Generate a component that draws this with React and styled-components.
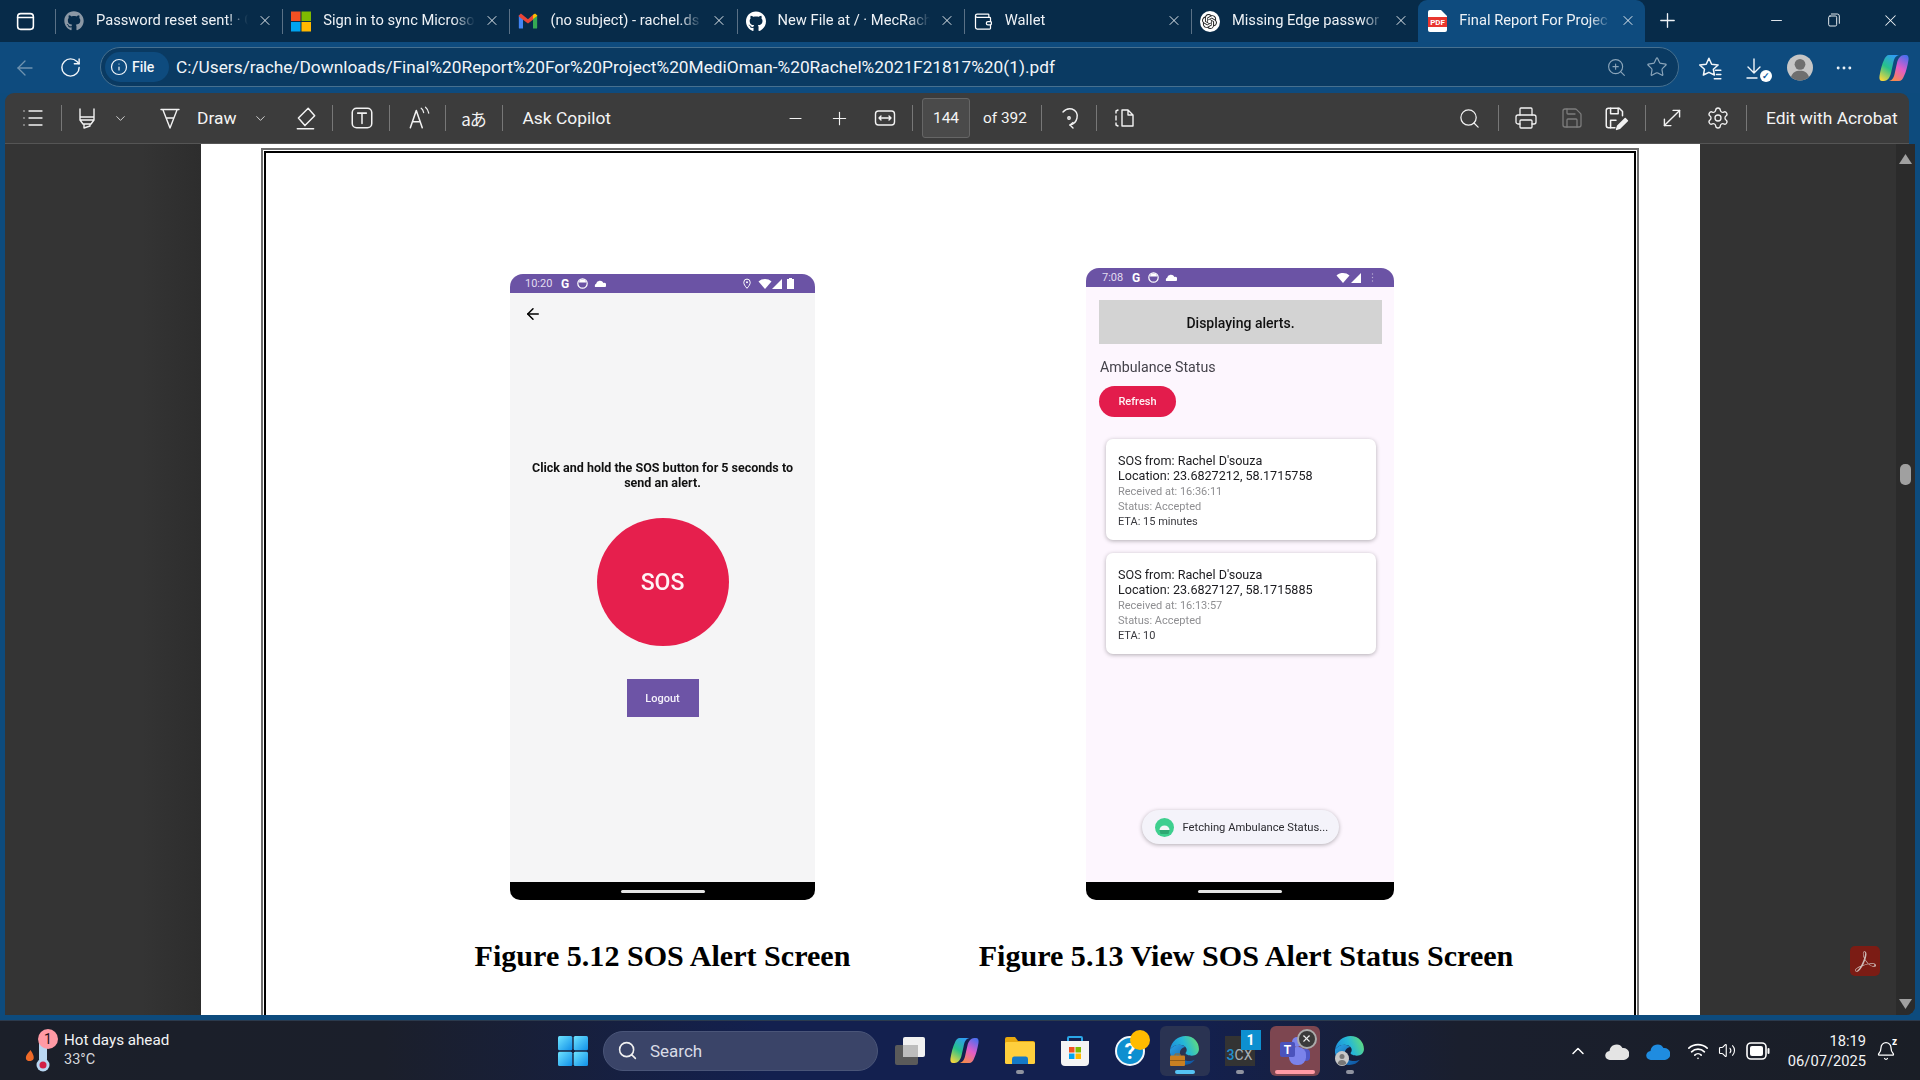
import React from 'react';
import styled, { createGlobalStyle } from 'styled-components';
import { FaGithub } from 'react-icons/fa';
import { SiOpenai, SiAdobeacrobatreader } from 'react-icons/si';
import { X, Minus, Plus, ChevronDown, List, RotateCw, Search, Printer, Save, Settings, MoveDiagonal, Star, ZoomIn, ChevronUp, Info, MoreHorizontal, ArrowLeft, Wallet, Volume2, Wifi, Bell } from 'lucide-react';

const UI = '"Roboto", "Noto Sans", sans-serif';

const Global = createGlobalStyle`
  html, body { margin: 0; padding: 0; width: 1920px; height: 1080px; overflow: hidden; background: #0e4b7e; }
  #root { width: 1920px; height: 1080px; }
  * { box-sizing: border-box; }
`;

const Screen = styled.div`
  width: 1920px; height: 1080px; display: flex; flex-direction: column;
  font-family: ${UI}; color: #fff; background: #0d4b7d; overflow: hidden;
`;

/* ---------- tab strip ---------- */
const TabStrip = styled.div`
  height: 42px; flex: none; display: flex; background: #072b49;
`;
const AppSlot = styled.div`
  width: 55px; display: flex; align-items: center; justify-content: center; padding-right: 5px;
`;
const Tab = styled.div`
  position: relative; width: 227.2px; height: 42px; flex: none;
  display: flex; align-items: center; padding-left: 9px;
  background: ${p => (p.$active ? '#0e4b7e' : 'transparent')};
  border-radius: ${p => (p.$active ? '9px 9px 0 0' : '0')};
  &::before {
    content: ''; position: absolute; left: 0; top: 9px; bottom: 8px; width: 1px;
    background: ${p => (p.$noSep ? 'transparent' : '#5a7186')};
  }
`;
const FavSlot = styled.span`
  width: 20px; height: 20px; flex: none; display: flex; align-items: center; justify-content: center;
  color: ${p => p.$c || '#fff'};
`;
const RoundFav = styled.span`
  width: 21px; height: 21px; border-radius: 50%; background: #fff; color: #222;
  display: flex; align-items: center; justify-content: center;
`;
const TabTitle = styled.span`
  margin: -2px 0 0 12px; width: 152px; font-size: 14.7px; line-height: 20px; white-space: nowrap; overflow: hidden;
  color: #eef2f6;
  -webkit-mask-image: linear-gradient(90deg, #000 130px, transparent 152px);
  mask-image: linear-gradient(90deg, #000 130px, transparent 152px);
`;
const TabClose = styled.span`
  margin: -2px 0 0 9px; width: 16px; display: flex; justify-content: center; color: #f2f5f8;
`;
const NewTab = styled.div`
  width: 44px; margin-top: -2px; display: flex; align-items: center; justify-content: center; color: #eef2f6;
`;
const WindowButtons = styled.div`
  margin-left: auto; display: flex; padding-right: 1px;
`;
const WinButton = styled.div`
  width: 57px; margin-top: -2px; display: flex; align-items: center; justify-content: center; color: #f2f5f8;
`;

/* ---------- address row ---------- */
const AddressRow = styled.div`
  height: 51px; flex: none; display: flex; align-items: center; background: #0e4b7e;
`;
const NavSlot = styled.div`
  width: ${p => p.$w}px; flex: none; display: flex; align-items: center; justify-content: center;
  color: ${p => p.$c || '#f2f6fa'}; position: relative;
`;
const AddressPill = styled.div`
  width: 1579px; height: 40px; flex: none; margin-top: -1px; border-radius: 20px; display: flex; align-items: center;
  background: #0a3a62; border: 1px solid #47708f; padding-left: 4px;
`;
const SiteChip = styled.div`
  width: 64px; height: 30px; border-radius: 15px; background: #0e4b7e; display: flex; align-items: center; padding-left: 5px; gap: 4px;
  font-size: 14px; font-weight: 500; color: #f2f6fa;
`;
const UrlText = styled.div`
  margin-left: 7px; font-size: 17.3px; color: #f1f5f9; white-space: nowrap;
`;
const PillEnd = styled.div`
  margin-left: auto; display: flex; color: #8ba5ba;
`;
const DownloadArrow = styled.span`
  display: flex; margin-right: 8px;
`;
const DownloadBadge = styled.span`
  position: absolute; right: 15px; bottom: -2px; width: 12px; height: 12px; border-radius: 50%; background: #fff; color: #0e5ba0;
  display: flex; align-items: center; justify-content: center; font-size: 9px; font-weight: 700;
`;

/* ---------- pdf toolbar ---------- */
const Toolbar = styled.div`
  height: 51px; flex: none; margin: 0 11px 0 5px; display: grid; grid-template-columns: 770px 670px 1fr;
  background: #3c3c3c; border-radius: 9px 9px 0 0; border-bottom: 1px solid #555;
`;
const ToolGroup = styled.div`
  display: flex; align-items: center; padding-left: ${p => p.$pl || 0}px; color: #f2f2f2;
`;
const ToolSlot = styled.div`
  width: ${p => p.$w}px; margin-left: ${p => p.$ml || 0}px; height: 24px; flex: none;
  display: flex; align-items: center; justify-content: center;
  opacity: ${p => (p.$off ? 0.35 : 1)};
`;
const Sep = styled.div`
  width: ${p => p.$w}px; flex: none; display: flex; justify-content: center;
  &::before { content: ''; width: 1px; height: 26px; background: #777; }
`;
const ToolText = styled.span`
  margin-left: ${p => p.$ml || 0}px; font-size: ${p => p.$s || 17.4}px; white-space: nowrap; color: #f4f4f4;
`;
const PageBox = styled.div`
  width: 48px; height: 40px; margin-left: 5px; flex: none; border-radius: 3px; background: #4a4a4a; border: 1px solid #666;
  display: flex; align-items: center; justify-content: center; font-size: 15.5px; color: #f4f4f4;
`;
const TranslateText = styled.span`
  font-family: "Noto Sans CJK JP", "Noto Sans", sans-serif; font-size: 17px; color: #f2f2f2; letter-spacing: -1px;
`;

/* ---------- viewer ---------- */
const Viewer = styled.div`
  position: relative; flex: 1; min-height: 0; margin: 0 5px 5px; display: flex; background: #333;
  border-radius: 0 0 9px 0; overflow: hidden;
`;
const Gutter = styled.div`
  width: 196px; flex: none; background: linear-gradient(90deg, #343434 70%, #2d2d2d 100%);
`;
const Page = styled.div`
  width: 1499px; flex: none; background: #fff; display: flex; flex-direction: column; padding: 4px 61px 0 60px; overflow: hidden;
`;
const FrameOuter = styled.div`
  flex: 1; margin-bottom: -12px; border: 2px solid #6e6e6e; padding: 1px; display: flex;
`;
const FrameInner = styled.div`
  flex: 1; border: 2px solid #000; padding: 115px 0 0 209px; display: flex; align-items: flex-start; gap: 129px; height: 100%;
`;
const Figure = styled.figure`
  margin: 0; width: ${p => p.$w}px; flex: none; display: flex; flex-direction: column; align-items: center;
  padding-top: ${p => p.$top || 0}px;
`;
const Caption = styled.figcaption`
  margin-top: 39px; font: bold 30.1px/34px "Liberation Serif", "Times New Roman", serif; color: #000; white-space: nowrap;
`;
const Phone = styled.div`
  width: ${p => p.$w}px; height: ${p => p.$h}px; margin-right: ${p => p.$mr || 0}px;
  display: flex; flex-direction: column; overflow: hidden; border-radius: 13px 13px 10px 10px;
  background: ${p => p.$bg}; filter: blur(0.3px);
`;
const StatusBar = styled.div`
  height: 19px; flex: none; background: #6b53a5; display: flex; align-items: center; padding: 0 ${p => p.$pr}px 0 ${p => p.$pl}px; color: #f1edf8;
`;
const StatusTime = styled.span`
  font-size: 11px; color: #e2dcef; margin-right: 5px; min-width: ${p => p.$w}px;
`;
const StatusG = styled.span`
  font-size: 12px; font-weight: 700; width: 13px; color: #fff;
`;
const StatusIcon = styled.span`
  width: ${p => p.$w || 17}px; display: flex; align-items: center; justify-content: center; flex: none;
`;
const StatusRight = styled.div`
  margin-left: auto; display: flex; align-items: center;
`;
const PhoneBody = styled.div`
  flex: 1; min-height: 0; display: flex; flex-direction: column; padding-top: ${p => p.$pt}px; align-items: ${p => p.$align || 'stretch'};
`;
const NavBar = styled.div`
  height: 18px; flex: none; background: #000; display: flex; justify-content: center; padding-top: 8px;
`;
const HomeBar = styled.div`
  width: 84px; height: 3px; border-radius: 2px; background: #e4e4e4;
`;
const BackArrow = styled.div`
  align-self: flex-start; margin-left: 14px; height: 16px; color: #000; display: flex; align-items: center;
`;
const Instruction = styled.p`
  margin: 138px 0 0; width: 285px; text-align: center; font-size: 12.5px; line-height: 15px; font-weight: 700; color: #111;
`;
const SosButton = styled.div`
  margin-top: 28px; width: 132px; height: 128px; border-radius: 50%; background: #e61f4d; display: flex; align-items: center; justify-content: center;
  font-size: 23px; font-weight: 500; color: #fff3f5;
`;
const LogoutButton = styled.div`
  margin-top: 33px; width: 72px; height: 38px; background: #6d54a6; display: flex; align-items: center; justify-content: center;
  font-size: 11px; font-weight: 500; color: #f4f0fa;
`;
const Banner = styled.div`
  margin: 0 12px 0 13px; height: 44px; padding-top: 1px; background: #d3d3d3; display: flex; align-items: center; justify-content: center;
  font-size: 14px; font-weight: 500; color: #111;
`;
const SectionLabel = styled.div`
  margin: 13px 0 0 14px; font-size: 14.2px; line-height: 20px; color: #44424a;
`;
const RefreshButton = styled.div`
  margin: 9px 0 0 13px; width: 77px; height: 31px; border-radius: 16px; background: #e31c4c; display: flex; align-items: center; justify-content: center;
  font-size: 11px; font-weight: 500; color: #fdf2f4;
`;
const AlertCard = styled.div`
  margin: ${p => p.$mt}px 18px 0 20px; height: 101px; padding: 14px 0 0 12px; background: #fff; border-radius: 7px;
  box-shadow: 0 1px 4px rgba(0, 0, 0, 0.3);
`;
const AlertLine = styled.div`
  font-size: 12.6px; line-height: 15px; color: #1b1b1f; white-space: nowrap;
`;
const AlertMeta = styled.div`
  font-size: 11px; line-height: 15.2px; white-space: nowrap; color: ${p => (p.$dark ? '#3a3a3f' : '#8f8f92')};
  ${AlertLine} + & { margin-top: 1px; }
`;
const Toast = styled.div`
  margin: auto 0 38px; align-self: center; width: 197px; height: 34px; border-radius: 17px; background: #f4f3fa;
  box-shadow: 0 1px 4px rgba(0, 0, 0, 0.3); display: flex; align-items: center; padding-left: 13px; gap: 9px;
  font-size: 11.2px; color: #2b2b30; white-space: nowrap;
`;
const RightGutter = styled.div`
  flex: 1; display: flex; justify-content: flex-end; background: #333;
`;
const ScrollTrack = styled.div`
  width: 19px; background: #2b2b2b; display: flex; flex-direction: column; align-items: center; padding: 10px 0 6px; justify-content: space-between;
`;
const ScrollThumb = styled.div`
  position: absolute; right: 4px; top: 320px; width: 11px; height: 21px; border-radius: 5px; background: #a0a0a0;
`;
const AcrobatBadge = styled.div`
  position: absolute; right: 35px; bottom: 39px; width: 30px; height: 30px; border-radius: 5px; background: #7b1c14; color: #cdbab6;
  display: flex; align-items: center; justify-content: center;
`;

/* ---------- taskbar ---------- */
const Taskbar = styled.div`
  height: 60px; flex: none; display: flex; align-items: center;
  background: linear-gradient(90deg, #1b1f29 0%, #1b1f2b 20%, #13204f 40%, #13204f 62%, #1a1f2e 76%, #1a1e26 100%);
  border-top: 1px solid #2b3a4d;
`;
const WeatherArea = styled.div`
  width: 545px; flex: none; display: flex; align-items: center; padding-left: 25px;
`;
const WeatherIcon = styled.div`
  position: relative; width: 30px; height: 44px; flex: none; margin-right: 9px;
`;
const WeatherBadge = styled.span`
  position: absolute; left: 13px; top: 0; width: 20px; height: 20px; border-radius: 50%; background: #ff9aa5; color: #24121a;
  display: flex; align-items: center; justify-content: center; font-size: 14px;
`;
const WeatherText = styled.div`
  margin-top: -2px; font-size: 15.2px; line-height: 20px; color: #f4f4f6;
`;
const WeatherTemp = styled.div`
  color: #d6d7db; font-size: 14.5px;
`;
const TaskSlot = styled.div`
  position: relative; width: ${p => p.$w || 55}px; flex: none; display: flex; align-items: center; justify-content: center;
`;
const TaskButton = styled.div`
  position: relative; width: 50px; height: 50px; border-radius: 6px; display: flex; align-items: center; justify-content: center;
  background: ${p => p.$bg || 'transparent'};
`;
const Running = styled.span`
  position: absolute; left: 50%; bottom: 2px; transform: translateX(-50%); width: ${p => p.$w}px; height: 3.5px; border-radius: 2px; background: ${p => p.$c};
`;
const SearchBox = styled.div`
  width: 275px; height: 40px; margin-left: 3px; margin-right: 4px; flex: none; border-radius: 20px; background: #3a4468; border: 1px solid #4a5578;
  display: flex; align-items: center; padding-left: 13px; gap: 12px; font-size: 17px; color: #d9dce6;
`;
const CountBadge = styled.span`
  position: absolute; right: 4px; top: 4px; width: 20px; height: 20px; background: #0d90d0; color: #fff; font-size: 14px; font-weight: 700;
  display: flex; align-items: center; justify-content: center;
`;
const CloseBadge = styled.span`
  position: absolute; right: 3px; top: 3px; width: 20px; height: 20px; border-radius: 50%; background: #3a3a3a; border: 2px solid #aaa; color: #eee;
  display: flex; align-items: center; justify-content: center;
`;
const HelpBadge = styled.span`
  position: absolute; right: 5px; top: 4px; width: 20px; height: 20px; border-radius: 50%; background: #ffbb00;
`;
const ThreeCx = styled.div`
  width: 30px; height: 30px; background: #333; font-size: 14px; color: #a9b0b6; display: flex; align-items: flex-end; justify-content: center;
  padding-bottom: 3px;
  & > b { color: #1f8fd0; font-weight: 500; }
`;
const Tray = styled.div`
  flex: 1; display: flex; align-items: center; justify-content: flex-end; padding-right: 23px; color: #fff;
`;
const Clock = styled.div`
  width: 86px; margin-right: 9px; text-align: right; font-size: 14.7px; line-height: 20px; color: #f4f4f6; white-space: nowrap;
`;
const SleepZ = styled.span`
  position: absolute; right: 0; top: -5px; font-size: 10px; font-weight: 700; color: #fff;
`;

/* ---------- drawings ---------- */
const stroke = { fill: 'none', stroke: 'currentColor', strokeWidth: 1.4, strokeLinecap: 'round', strokeLinejoin: 'round' };
const DrawingDefs = styled.svg`
  position: absolute; width: 0; height: 0;
`;
const Defs = () => (
  <DrawingDefs aria-hidden="true">
    <defs>
      <linearGradient id="edgeTop" x1="0" y1="0.6" x2="1" y2="0.3">
        <stop offset="0" stopColor="#1c8fdc" /><stop offset=".5" stopColor="#25b7d8" /><stop offset="1" stopColor="#63dd7a" />
      </linearGradient>
      <linearGradient id="edgeLow" x1="0" y1="0" x2="1" y2="1">
        <stop offset="0" stopColor="#2aa3e6" /><stop offset="1" stopColor="#0c4f9c" />
      </linearGradient>
      <linearGradient id="copA" x1="0.7" y1="0" x2="0.2" y2="1">
        <stop offset="0" stopColor="#2f9cf4" /><stop offset=".5" stopColor="#27c28a" /><stop offset="1" stopColor="#f5d63d" />
      </linearGradient>
      <linearGradient id="copB" x1="0.7" y1="0" x2="0.2" y2="1">
        <stop offset="0" stopColor="#f58a4e" /><stop offset=".5" stopColor="#e25cc8" /><stop offset="1" stopColor="#4a6ff0" />
      </linearGradient>
      <linearGradient id="winG" x1="0" y1="0" x2="1" y2="1">
        <stop offset="0" stopColor="#6fe4ff" /><stop offset="1" stopColor="#0f8fe8" />
      </linearGradient>
    </defs>
  </DrawingDefs>
);
const Ico = ({ s = 22, vb = 24, children }) => (
  <svg width={s} height={s} viewBox={`0 0 ${vb} ${vb}`} {...stroke}>{children}</svg>
);
const Sidebar = () => <Ico s={21}><rect x="3" y="3" width="18" height="18" rx="3.5" strokeWidth="1.8" /><path d="M3 7.5h18" strokeWidth="1.8" /></Ico>;
const Highlighter = () => <Ico s={26}><path d="M5 3v8h14V3M5 11v3h14v-3M5 14l3 4h8l3-4M9 18v4l6-2v-2" /></Ico>;
const Pen = () => <Ico s={26}><path d="M3 3.5h18M5 4l7 18 7-18M8 12h8" /></Ico>;
const EraserI = () => <Ico s={26}><path d="M14 3l6 7-9 9-6-7zM5 12l6 7M4 22h15" /></Ico>;
const TBox = () => <Ico s={26}><rect x="3" y="3" width="18" height="18" rx="4" /><path d="M8 7.5h8M12 7.5V17" /></Ico>;
const ReadAloud = () => (
  <Ico s={26}>
    <path d="M4 21L9.5 5l5.5 16M6.5 15.5h6" />
    <path d="M14 3c1.5 1 2 2.5 2.3 4M18 2c2 1.5 2.7 3.5 3 5.5" strokeWidth="1.1" />
  </Ico>
);
const FitWidth = () => <Ico s={24}><rect x="2.5" y="5" width="19" height="14" rx="3" /><path d="M6 12h12M8 10l-2 2 2 2M16 10l2 2-2 2" /></Ico>;
const RotateI = () => <Ico s={26}><path d="M6 6a9 9 0 0 1 9-3c4 1.2 6 5 5 9a9 9 0 0 1-7 7" /><path d="M16 22l-3-3 3-2.5" /><circle cx="12" cy="12" r="1.2" /></Ico>;
const PagesI = () => <Ico s={24}><path d="M10 4h6l5 5v11H10zM16 4v5h5" /><path d="M4 7V5l2-1M4 10v4M4 17v2l2 1" /></Ico>;
const SaveAs = () => <Ico s={26}><path d="M18 10V6l-3-3H5a2 2 0 0 0-2 2v14a2 2 0 0 0 2 2h6" /><path d="M7 3v5h7V3M7 21v-7h5" /><path d="M20.5 12.5l2 2-7 7-3 1 1-3z" fill="currentColor" /></Ico>;
const FavStar = () => <Ico s={26}><path d="M11 3l2.5 5.5 6 .7-4.4 4 1 5.3L11 16l-5.1 2.5 1-5.3-4.400-4 6-.7z" /><path d="M17 14h5M18 18h4M16 22h6" /></Ico>;
const DownloadI = () => <Ico s={24}><path d="M12 3v14M6 11l6 6 6-6M5 22h10" /></Ico>;
const Avatar = () => (
  <svg width="29" height="29" viewBox="0 0 29 29">
    <circle cx="14.5" cy="14.5" r="14.5" fill="#c6c6c6" />
    <circle cx="14.5" cy="11" r="6" fill="#6f6f6f" />
    <path d="M4.5 25c1.5-5 5-7 10-7s8.500 2 10 7a14.500 14.500 0 0 1-20 0z" fill="#6f6f6f" />
  </svg>
);
const RIBBON = 'M10 2H20C16 3 15 6 14 11L12 20C11 25 8 28 5 28H3C1 28 0 26 .5 23 1.5 17 3 11 5 7 6 4 8 2 10 2Z';
const CopilotMark = ({ s = 30 }) => (
  <svg width={s} height={s} viewBox="0 0 30 30">
    <path d={RIBBON} fill="url(#copA)" />
    <path d={RIBBON} fill="url(#copB)" transform="rotate(180 15 15)" />
  </svg>
);
const GmailMark = () => (
  <svg width="20" height="18" viewBox="0 0 24 20">
    <path d="M1 3v15a1 1 0 0 0 1 1h4V8z" fill="#4285F4" />
    <path d="M18 8v11h4a1 1 0 0 0 1-1V3z" fill="#34A853" />
    <path d="M1 3.5 3.5 1 12 8l6-5.5v6L12 13 6 8.5 1 4.5z" fill="#EA4335" />
    <path d="M18 2.5 20.5 1 23 3v1l-5 4z" fill="#FBBC04" />
  </svg>
);
const MsMark = () => (
  <svg width="21" height="21" viewBox="0 0 21 21">
    <rect width="10" height="10" fill="#f25022" /><rect x="11" width="10" height="10" fill="#7fba00" />
    <rect y="11" width="10" height="10" fill="#00a4ef" /><rect x="11" y="11" width="10" height="10" fill="#ffb900" />
  </svg>
);
const PdfMark = () => (
  <svg width="19" height="22" viewBox="0 0 19 22">
    <path d="M2 0h11l6 6v14a2 2 0 0 1-2 2H2a2 2 0 0 1-2-2V2a2 2 0 0 1 2-2z" fill="#fff" />
    <rect x="0" y="7" width="19" height="10" fill="#e8362f" />
    <text x="9.5" y="15" textAnchor="middle" fontSize="8" fontWeight="700" fill="#fff" fontFamily="Roboto">PDF</text>
  </svg>
);
const RestoreI = () => <Ico s={16}><rect x="4" y="6" width="12" height="15" rx="2" /><path d="M8 3h9a3 3 0 0 1 3 3v11" /></Ico>;
const AndroidBadge = () => (
  <svg width="19" height="19" viewBox="0 0 19 19">
    <circle cx="9.5" cy="9.5" r="9.5" fill="#3ecf8e" />
    <path d="M4.5 12a5 4.5 0 0 1 10 0z" fill="#f3f6f5" />
    <path d="M4.5 12h10l-1 4h-8z" fill="#2fa873" />
  </svg>
);
const WifiS = () => <svg width="14" height="10" viewBox="0 0 13 10"><path d="M0 2.5C3.5-.8 9.5-.8 13 2.5L6.5 10z" fill="#fff" /></svg>;
const SignalS = () => <svg width="10" height="10" viewBox="0 0 10 10"><path d="M10 0v10H0z" fill="#fff" /></svg>;
const BatS = () => <svg width="7" height="11" viewBox="0 0 7 11"><path d="M2 0h3v1h2v10H0V1h2z" fill="#fff" /></svg>;
const FaceS = () => <svg width="11" height="11" viewBox="0 0 11 11"><circle cx="5.5" cy="5.5" r="4.7" fill="none" stroke="#fff" strokeWidth="1.2" /><path d="M2 4.5a3.5 3 0 0 1 7 0z" fill="#fff" /></svg>;
const CloudS = () => <svg width="12" height="7" viewBox="0 0 12 7"><path d="M1 7a1 2 0 0 1 1-3 4 4 0 0 1 7.5-1A2 2 0 0 1 11 7z" fill="#fff" /></svg>;
const PinS = () => <svg width="8" height="11" viewBox="0 0 8 11"><path d="M4 10.3C2 8 .8 6.3.8 4.3a3.2 3.2 0 0 1 6.4 0C7.2 6.3 6 8 4 10.3z" fill="none" stroke="#fff" /><circle cx="4" cy="4.2" r="1" fill="#fff" /></svg>;
const DotsS = () => <svg width="3" height="11" viewBox="0 0 3 11"><circle cx="1.5" cy="2" r=".7" fill="#b9aed3" /><circle cx="1.5" cy="5.5" r=".7" fill="#b9aed3" /><circle cx="1.5" cy="9" r=".7" fill="#b9aed3" /></svg>;
const WinLogo = () => (
  <svg width="30" height="30" viewBox="0 0 30 30">
    <rect x="0" y="0" width="14.3" height="14.3" rx="1.5" fill="url(#winG)" /><rect x="15.7" y="0" width="14.3" height="14.3" rx="1.5" fill="url(#winG)" />
    <rect x="0" y="15.7" width="14.3" height="14.3" rx="1.5" fill="url(#winG)" /><rect x="15.7" y="15.7" width="14.3" height="14.3" rx="1.5" fill="url(#winG)" />
  </svg>
);
const TaskView = () => (
  <svg width="30" height="28" viewBox="0 0 30 28">
    <rect x="0" y="8" width="23" height="20" rx="2" fill="#5a5a5a" />
    <rect x="8" y="0" width="22" height="20" rx="2" fill="#f1f1f1" />
    <rect x="8" y="8" width="15" height="12" fill="#bdbdbd" />
  </svg>
);
const FolderI = () => (
  <svg width="30" height="27" viewBox="0 0 30 27">
    <path d="M0 2a2 2 0 0 1 2-2h8l3 4h15a2 2 0 0 1 2 2v3H0z" fill="#e8a80e" />
    <rect y="5" width="30" height="22" rx="1.5" fill="#ffcf3d" />
    <path d="M5 27v-5a2.5 2.5 0 0 1 2.5-2.5h15a2.5 2.5 0 0 1 2.5 2.5v5z" transform="translate(3 0) scale(.8 1)" fill="#1479c8" />
  </svg>
);
const StoreI = () => (
  <svg width="30" height="30" viewBox="0 0 30 30">
    <path d="M8 5V2a1 1 0 0 1 1-1h12a1 1 0 0 1 1 1v3" fill="none" stroke="#2aa6e8" strokeWidth="2" />
    <path d="M1 5h28v21a4 4 0 0 1-4 4H5a4 4 0 0 1-4-4z" fill="#f5f5f5" />
    <rect x="9" y="11" width="5.5" height="5.5" fill="#f25022" /><rect x="15.5" y="11" width="5.5" height="5.5" fill="#7fba00" />
    <rect x="9" y="17.5" width="5.5" height="5.5" fill="#00a4ef" /><rect x="15.5" y="17.5" width="5.5" height="5.5" fill="#ffb900" />
  </svg>
);
const HelpI = () => (
  <svg width="30" height="30" viewBox="0 0 30 30">
    <circle cx="15" cy="15" r="14" fill="#0e8fd0" stroke="#f2f7fb" strokeWidth="2" />
    <text x="15" y="23" textAnchor="middle" fontSize="22" fontWeight="700" fill="#fff" fontFamily="Roboto">?</text>
  </svg>
);
const EdgeI = () => (
  <svg width="31" height="33" viewBox="0 0 30 30">
    <path d="M1 14C2.5 6 9 1 16 1c8 0 13 6 13 12.5 0 4-3 6.5-7 6.5-3 0-6-1-6-2.5 1-1.5 2-3.5 0-6C13 8.5 5.5 8.5 1 14z" fill="url(#edgeTop)" />
    <path d="M1 14C0 22 6.5 29 15 29c4 0 7.5-1.5 10-5-5 2-12 2-14-4.5C9.5 15 12.5 11.5 16 11.5 11 8 5 9 1 14z" fill="url(#edgeLow)" />
  </svg>
);
const TeamsI = () => (
  <svg width="30" height="28" viewBox="0 0 30 28">
    <circle cx="17" cy="5" r="5" fill="#7b83eb" />
    <circle cx="26" cy="8" r="3.5" fill="#5059c9" />
    <rect x="20" y="12" width="10" height="12" rx="4" fill="#5059c9" />
    <rect x="9" y="10" width="17" height="18" rx="7.5" fill="#7b83eb" />
    <rect x="0" y="5" width="15" height="15" rx="2" fill="#4b53bc" />
    <text x="7.5" y="17" textAnchor="middle" fontSize="12" fontWeight="700" fill="#fff" fontFamily="Roboto">T</text>
  </svg>
);
const CaseWrap = styled.span`
  position: absolute; left: 10px; bottom: 10px; display: flex;
`;
const CaseBadge = () => (
  <CaseWrap>
    <svg width="15" height="13" viewBox="0 0 15 13">
      <path d="M5 3V1h5v2" fill="none" stroke="#a3691f" />
      <rect y="2.5" width="15" height="10.5" rx="1" fill="#c87f22" />
      <rect y="7" width="15" height="1" fill="#8f5a18" />
    </svg>
  </CaseWrap>
);
const ProfileWrap = styled.span`
  position: absolute; left: 10px; bottom: 10px; display: flex;
`;
const ProfileBadge = () => (
  <ProfileWrap>
    <svg width="14" height="15" viewBox="0 0 14 15">
      <ellipse cx="7" cy="7.5" rx="7" ry="7.5" fill="#c8c8c8" />
      <circle cx="7" cy="5.5" r="2.5" fill="#777" />
      <path d="M2.5 12.5c.8-2.5 2.3-3.5 4.5-3.5s3.7 1 4.5 3.5a7 7 0 0 1-9 0z" fill="#777" />
    </svg>
  </ProfileWrap>
);
const CloudI = ({ c }) => (
  <svg width="24" height="20" viewBox="0 0 24 20"><path d="M5 19a4.5 4.5 0 0 1-.5-9 7 7 0 0 1 13-3 6 6 0 0 1 1.5 12z" fill={c} /></svg>
);
const BatteryI = () => (
  <svg width="24" height="18" viewBox="0 0 24 18">
    <rect x="1" y="1" width="19" height="16" rx="4" fill="none" stroke="#fff" strokeWidth="1.6" />
    <rect x="4" y="4" width="13" height="10" rx="2" fill="#fff" />
    <rect x="21.5" y="6" width="2" height="6" rx="1" fill="#fff" />
  </svg>
);
const Thermo = () => (
  <svg width="30" height="44" viewBox="0 0 30 44">
    <path d="M3 24c-1.5 2-2.5 3.5-2 6 .5 2.5 6 3 7.5 0 1-2.5-1-6-3-9-.5 1-1.5 2-2.500 3z" fill="#f06a28" />
    <rect x="14" y="10" width="8" height="24" rx="4" fill="#b9d7f2" />
    <circle cx="18" cy="36" r="6.5" fill="#b9d7f2" />
    <circle cx="18" cy="36" r="3.5" fill="#d21f45" />
  </svg>
);

const tabs = [
  { t: 'Password reset sent! · G', i: <FaGithub size={20} />, c: '#8b98a5' },
  { t: 'Sign in to sync Microso', i: <MsMark /> },
  { t: '(no subject) - rachel.ds', i: <GmailMark /> },
  { t: 'New File at / · MecRach', i: <FaGithub size={21} /> },
  { t: 'Wallet', i: <Wallet size={21} strokeWidth={1.5} /> },
  { t: 'Missing Edge passwor', i: <RoundFav><SiOpenai size={15} /></RoundFav> },
  { t: 'Final Report For Projec', i: <PdfMark />, active: true },
];

const alerts = [
  { loc: '23.6827212, 58.1715758', at: '16:36:11', eta: '15 minutes', mt: 22 },
  { loc: '23.6827127, 58.1715885', at: '16:13:57', eta: '10', mt: 13 },
];

const Bar = ({ time, tw, pl, pr, right }) => (
  <StatusBar $pl={pl} $pr={pr}>
    <StatusTime $w={tw}>{time}</StatusTime>
    <StatusG>G</StatusG>
    <StatusIcon><FaceS /></StatusIcon>
    <StatusIcon><CloudS /></StatusIcon>
    <StatusRight>{right}</StatusRight>
  </StatusBar>
);

export default function App() {
  return (
    <Screen>
      <Global />
      <Defs />
      <TabStrip>
        <AppSlot><Sidebar /></AppSlot>
        {tabs.map(x => (
          <Tab key={x.t} $active={x.active} $noSep={x.active}>
            <FavSlot $c={x.c}>{x.i}</FavSlot>
            <TabTitle>{x.t}</TabTitle>
            <TabClose><X size={17} strokeWidth={1.4} /></TabClose>
          </Tab>
        ))}
        <NewTab><Plus size={23} strokeWidth={1.4} /></NewTab>
        <WindowButtons>
          <WinButton><Minus size={17} strokeWidth={1.3} /></WinButton>
          <WinButton><RestoreI /></WinButton>
          <WinButton><X size={19} strokeWidth={1.3} /></WinButton>
        </WindowButtons>
      </TabStrip>

      <AddressRow>
        <NavSlot $w={49} $c="#6f93b0"><ArrowLeft size={24} strokeWidth={1.3} /></NavSlot>
        <NavSlot $w={43}><RotateCw size={23} strokeWidth={1.5} /></NavSlot>
        <NavSlot $w={8} />
        <AddressPill>
          <SiteChip><Info size={18} strokeWidth={1.6} />File</SiteChip>
          <UrlText>C:/Users/rache/Downloads/Final%20Report%20For%20Project%20MediOman-%20Rachel%2021F21817%20(1).pdf</UrlText>
          <PillEnd>
            <NavSlot $w={40} $c="#8ba5ba"><ZoomIn size={21} strokeWidth={1.3} /></NavSlot>
            <NavSlot $w={42} $c="#8ba5ba"><Star size={22} strokeWidth={1.3} /></NavSlot>
          </PillEnd>
        </AddressPill>
        <NavSlot $w={12} />
        <NavSlot $w={38}><FavStar /></NavSlot>
        <NavSlot $w={58}><DownloadArrow><DownloadI /></DownloadArrow><DownloadBadge>✓</DownloadBadge></NavSlot>
        <NavSlot $w={26}><Avatar /></NavSlot>
        <NavSlot $w={62}><MoreHorizontal size={20} strokeWidth={1.5} /></NavSlot>
        <NavSlot $w={38}><CopilotMark /></NavSlot>
      </AddressRow>

      <Toolbar>
        <ToolGroup $pl={14}>
          <ToolSlot $w={28}><List size={24} strokeWidth={1.3} /></ToolSlot>
          <Sep $w={28} />
          <ToolSlot $w={24}><Highlighter /></ToolSlot>
          <ToolSlot $w={42}><ChevronDown size={15} strokeWidth={1.3} /></ToolSlot>
          <ToolSlot $w={24} $ml={17}><Pen /></ToolSlot>
          <ToolText $ml={15}>Draw</ToolText>
          <ToolSlot $w={48}><ChevronDown size={15} strokeWidth={1.3} /></ToolSlot>
          <ToolSlot $w={43}><EraserI /></ToolSlot>
          <Sep $w={9} />
          <ToolSlot $w={50}><TBox /></ToolSlot>
          <Sep $w={6} />
          <ToolSlot $w={52}><ReadAloud /></ToolSlot>
          <Sep $w={2} />
          <ToolSlot $w={54}><TranslateText>aあ</TranslateText></ToolSlot>
          <Sep $w={4} />
          <ToolText $ml={18}>Ask Copilot</ToolText>
        </ToolGroup>
        <ToolGroup>
          <ToolSlot $w={40}><Minus size={19} strokeWidth={1.3} /></ToolSlot>
          <ToolSlot $w={48}><Plus size={21} strokeWidth={1.3} /></ToolSlot>
          <ToolSlot $w={44}><FitWidth /></ToolSlot>
          <Sep $w={10} />
          <PageBox>144</PageBox>
          <ToolText $ml={13} $s={15.4}>of 392</ToolText>
          <Sep $w={30} />
          <ToolSlot $w={24}><RotateI /></ToolSlot>
          <Sep $w={31} />
          <ToolSlot $w={24}><PagesI /></ToolSlot>
        </ToolGroup>
        <ToolGroup>
          <ToolSlot $w={48}><Search size={23} strokeWidth={1.3} /></ToolSlot>
          <Sep $w={10} />
          <ToolSlot $w={46}><Printer size={24} strokeWidth={1.3} /></ToolSlot>
          <ToolSlot $w={46} $off><Save size={24} strokeWidth={1.3} /></ToolSlot>
          <ToolSlot $w={42}><SaveAs /></ToolSlot>
          <Sep $w={16} />
          <ToolSlot $w={38}><MoveDiagonal size={26} strokeWidth={1.3} /></ToolSlot>
          <ToolSlot $w={54}><Settings size={24} strokeWidth={1.3} /></ToolSlot>
          <Sep $w={2} />
          <ToolText $ml={19}>Edit with Acrobat</ToolText>
        </ToolGroup>
      </Toolbar>

      <Viewer>
        <Gutter />
        <Page>
          <FrameOuter>
            <FrameInner>
              <Figure $w={375} $top={6}>
                <Phone $w={305} $h={626} $bg="#f5f5f6">
                  <Bar time="10:20" tw={31} pl={15} pr={17} right={<>
                    <StatusIcon $w={22}><PinS /></StatusIcon>
                    <StatusIcon $w={14}><WifiS /></StatusIcon>
                    <StatusIcon $w={10}><SignalS /></StatusIcon>
                    <StatusIcon $w={16}><BatS /></StatusIcon>
                  </>} />
                  <PhoneBody $pt={13} $align="center">
                    <BackArrow><ArrowLeft size={18} strokeWidth={2} /></BackArrow>
                    <Instruction>Click and hold the SOS button for 5 seconds to send an alert.</Instruction>
                    <SosButton>SOS</SosButton>
                    <LogoutButton>Logout</LogoutButton>
                  </PhoneBody>
                  <NavBar><HomeBar /></NavBar>
                </Phone>
                <Caption>Figure 5.12 SOS Alert Screen</Caption>
              </Figure>
              <Figure $w={534}>
                <Phone $w={308} $h={632} $mr={12} $bg="#fdf6fe">
                  <Bar time="7:08" tw={25} pl={16} pr={12} right={<>
                    <StatusIcon $w={14}><WifiS /></StatusIcon>
                    <StatusIcon $w={12}><SignalS /></StatusIcon>
                    <StatusIcon $w={20}><DotsS /></StatusIcon>
                  </>} />
                  <PhoneBody $pt={13}>
                    <Banner>Displaying alerts.</Banner>
                    <SectionLabel>Ambulance Status</SectionLabel>
                    <RefreshButton>Refresh</RefreshButton>
                    {alerts.map(a => (
                      <AlertCard key={a.at} $mt={a.mt}>
                        <AlertLine>SOS from: Rachel D'souza</AlertLine>
                        <AlertLine>Location: {a.loc}</AlertLine>
                        <AlertMeta>Received at: {a.at}</AlertMeta>
                        <AlertMeta>Status: Accepted</AlertMeta>
                        <AlertMeta $dark>ETA: {a.eta}</AlertMeta>
                      </AlertCard>
                    ))}
                    <Toast><AndroidBadge />Fetching Ambulance Status...</Toast>
                  </PhoneBody>
                  <NavBar><HomeBar /></NavBar>
                </Phone>
                <Caption>Figure 5.13 View SOS Alert Status Screen</Caption>
              </Figure>
            </FrameInner>
          </FrameOuter>
        </Page>
        <RightGutter>
          <ScrollTrack>
            <svg width="13" height="10" viewBox="0 0 13 10"><path d="M6.5 0L13 10H0z" fill="#a0a0a0" /></svg>
            <svg width="13" height="10" viewBox="0 0 13 10"><path d="M6.5 10L13 0H0z" fill="#a0a0a0" /></svg>
          </ScrollTrack>
        </RightGutter>
        <ScrollThumb />
        <AcrobatBadge><SiAdobeacrobatreader size={21} /></AcrobatBadge>
      </Viewer>

      <Taskbar>
        <WeatherArea>
          <WeatherIcon><Thermo /><WeatherBadge>1</WeatherBadge></WeatherIcon>
          <WeatherText>
            Hot days ahead
            <WeatherTemp>33°C</WeatherTemp>
          </WeatherText>
        </WeatherArea>
        <TaskSlot><TaskButton><WinLogo /></TaskButton></TaskSlot>
        <SearchBox><Search size={21} strokeWidth={1.8} color="#f1f1f1" />Search</SearchBox>
        <TaskSlot><TaskButton><TaskView /></TaskButton></TaskSlot>
        <TaskSlot><TaskButton><CopilotMark s={29} /></TaskButton></TaskSlot>
        <TaskSlot><TaskButton><FolderI /><Running $w={8} $c="#8f93a0" /></TaskButton></TaskSlot>
        <TaskSlot><TaskButton><StoreI /></TaskButton></TaskSlot>
        <TaskSlot><TaskButton><HelpI /><HelpBadge /></TaskButton></TaskSlot>
        <TaskSlot><TaskButton $bg="#2a3352"><EdgeI /><CaseBadge /><Running $w={20} $c="#55c3f5" /></TaskButton></TaskSlot>
        <TaskSlot><TaskButton><ThreeCx><b>3</b>CX</ThreeCx><CountBadge>1</CountBadge><Running $w={8} $c="#8f93a0" /></TaskButton></TaskSlot>
        <TaskSlot><TaskButton $bg="#7d4650"><TeamsI /><CloseBadge><X size={11} strokeWidth={2.4} /></CloseBadge><Running $w={40} $c="#ff9aa5" /></TaskButton></TaskSlot>
        <TaskSlot><TaskButton><EdgeI /><ProfileBadge /><Running $w={8} $c="#8f93a0" /></TaskButton></TaskSlot>
        <Tray>
          <TaskSlot $w={36}><ChevronUp size={20} strokeWidth={1.8} /></TaskSlot>
          <TaskSlot $w={42}><CloudI c="#e4e4e4" /></TaskSlot>
          <TaskSlot $w={40}><CloudI c="#1f8ce0" /></TaskSlot>
          <TaskSlot $w={40}><Wifi size={22} strokeWidth={1.8} /></TaskSlot>
          <TaskSlot $w={18}><Volume2 size={21} strokeWidth={1.5} /></TaskSlot>
          <TaskSlot $w={44}><BatteryI /></TaskSlot>
          <Clock>18:19<br />06/07/2025</Clock>
          <TaskSlot $w={22}><Bell size={20} strokeWidth={1.5} /><SleepZ>z</SleepZ></TaskSlot>
        </Tray>
      </Taskbar>
    </Screen>
  );
}
